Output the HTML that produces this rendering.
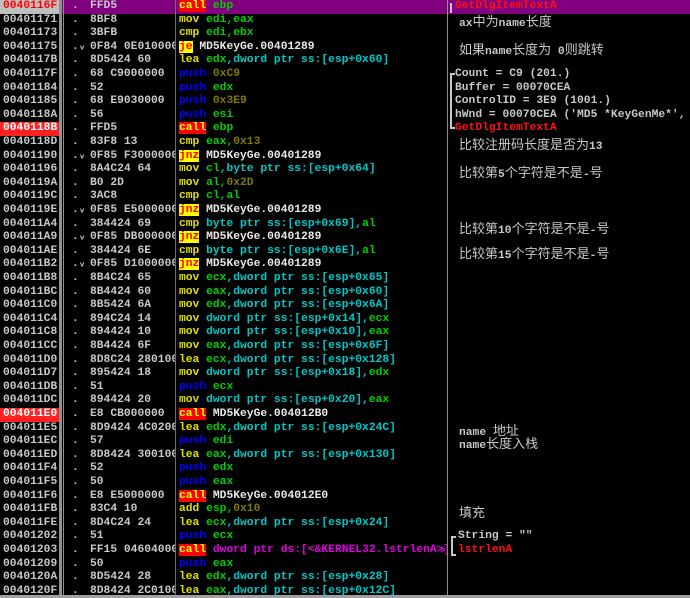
<!DOCTYPE html>
<html><head><meta charset="utf-8"><style>
body{margin:0;width:690px;height:598px;background:#000;overflow:hidden;position:relative;font-family:"Liberation Mono",monospace;font-weight:bold;font-size:11.3px;}
.r{position:absolute;left:0;width:690px;height:13.6px;line-height:13.6px;white-space:pre;}
.a{position:absolute;left:0;width:59px;padding-left:3px;box-sizing:border-box;color:#c8c8c8;height:13.6px;}
.m{position:absolute;left:72px;color:#c8c8c8;}
.h{position:absolute;left:90px;width:85px;overflow:hidden;color:#c8c8c8;}
.d{position:absolute;left:179px;width:268px;overflow:hidden;color:#e8e8e8;}
.y{color:#e0e000}.g{color:#00d000}.c{color:#00c8c8}.b{color:#0000ff}.o{color:#807800}.p{color:#e000e0}
.call{background:#ff0000;color:#ffff00;}
.j{background:#ffff00;color:#ff0000;}
.v{position:absolute;top:0;height:596px;background:#909090;}
.cm{position:absolute;left:459px;color:#c8c8c8;white-space:pre;font-family:"Liberation Mono","Noto Sans CJK SC",monospace;}
.cj{font-family:"Noto Sans CJK SC","WenQuanYi Zen Hei",sans-serif;font-weight:normal;font-size:13px;}
.rd{color:#ff1010}
</style></head><body>
<div style="position:absolute;left:0;top:0;width:690px;height:14px;background:#800080"></div>
<div class="v" style="left:59px;width:3px"></div>
<div class="v" style="left:63px;width:1px"></div>
<div class="v" style="left:175px;width:1px;background:#707070"></div>
<div class="v" style="left:447px;width:1px"></div>
<div style="position:absolute;left:0;top:595px;width:690px;height:3px;background:#a0a0a0"></div>

<div class="r" style="top:0"><span class="a" style="background:#c0c0c0;color:#ff0000">0040116F</span><span class="m">.</span><span class="h">FFD5</span><span class="d"><span class="call">call</span> <span class="g">ebp</span></span></div>
<div class="r" style="top:13.6px"><span class="a">00401171</span><span class="m">.</span><span class="h">8BF8</span><span class="d"><span class="y">mov</span> <span class="g">edi,eax</span></span></div>
<div class="r" style="top:27.2px"><span class="a">00401173</span><span class="m">.</span><span class="h">3BFB</span><span class="d"><span class="y">cmp</span> <span class="g">edi,ebx</span></span></div>
<div class="r" style="top:40.8px"><span class="a">00401175</span><span class="m">.ᵥ</span><span class="h">0F84 0E010000</span><span class="d"><span class="j">je</span> MD5KeyGe.00401289</span></div>
<div class="r" style="top:54.4px"><span class="a">0040117B</span><span class="m">.</span><span class="h">8D5424 60</span><span class="d"><span class="y">lea</span> <span class="g">edx</span><span class="c">,dword ptr ss:[esp+0x60]</span></span></div>
<div class="r" style="top:68px"><span class="a">0040117F</span><span class="m">.</span><span class="h">68 C9000000</span><span class="d"><span class="b">push</span> <span class="o">0xC9</span></span></div>
<div class="r" style="top:81.6px"><span class="a">00401184</span><span class="m">.</span><span class="h">52</span><span class="d"><span class="b">push</span> <span class="g">edx</span></span></div>
<div class="r" style="top:95.2px"><span class="a">00401185</span><span class="m">.</span><span class="h">68 E9030000</span><span class="d"><span class="b">push</span> <span class="o">0x3E9</span></span></div>
<div class="r" style="top:108.8px"><span class="a">0040118A</span><span class="m">.</span><span class="h">56</span><span class="d"><span class="b">push</span> <span class="g">esi</span></span></div>
<div class="r" style="top:122.4px"><span class="a" style="background:#ff2020;color:#fff">0040118B</span><span class="m">.</span><span class="h">FFD5</span><span class="d"><span class="call">call</span> <span class="g">ebp</span></span></div>
<div class="r" style="top:136px"><span class="a">0040118D</span><span class="m">.</span><span class="h">83F8 13</span><span class="d"><span class="y">cmp</span> <span class="g">eax,</span><span class="o">0x13</span></span></div>
<div class="r" style="top:149.6px"><span class="a">00401190</span><span class="m">.ᵥ</span><span class="h">0F85 F3000000</span><span class="d"><span class="j">jnz</span> MD5KeyGe.00401289</span></div>
<div class="r" style="top:163.2px"><span class="a">00401196</span><span class="m">.</span><span class="h">8A4C24 64</span><span class="d"><span class="y">mov</span> <span class="g">cl</span><span class="c">,byte ptr ss:[esp+0x64]</span></span></div>
<div class="r" style="top:176.8px"><span class="a">0040119A</span><span class="m">.</span><span class="h">B0 2D</span><span class="d"><span class="y">mov</span> <span class="g">al,</span><span class="o">0x2D</span></span></div>
<div class="r" style="top:190.4px"><span class="a">0040119C</span><span class="m">.</span><span class="h">3AC8</span><span class="d"><span class="y">cmp</span> <span class="g">cl,al</span></span></div>
<div class="r" style="top:204px"><span class="a">0040119E</span><span class="m">.ᵥ</span><span class="h">0F85 E5000000</span><span class="d"><span class="j">jnz</span> MD5KeyGe.00401289</span></div>
<div class="r" style="top:217.6px"><span class="a">004011A4</span><span class="m">.</span><span class="h">384424 69</span><span class="d"><span class="y">cmp</span> <span class="c">byte ptr ss:[esp+0x69],</span><span class="g">al</span></span></div>
<div class="r" style="top:231.2px"><span class="a">004011A9</span><span class="m">.ᵥ</span><span class="h">0F85 DB000000</span><span class="d"><span class="j">jnz</span> MD5KeyGe.00401289</span></div>
<div class="r" style="top:244.8px"><span class="a">004011AE</span><span class="m">.</span><span class="h">384424 6E</span><span class="d"><span class="y">cmp</span> <span class="c">byte ptr ss:[esp+0x6E],</span><span class="g">al</span></span></div>
<div class="r" style="top:258.4px"><span class="a">004011B2</span><span class="m">.ᵥ</span><span class="h">0F85 D1000000</span><span class="d"><span class="j">jnz</span> MD5KeyGe.00401289</span></div>
<div class="r" style="top:272px"><span class="a">004011B8</span><span class="m">.</span><span class="h">8B4C24 65</span><span class="d"><span class="y">mov</span> <span class="g">ecx</span><span class="c">,dword ptr ss:[esp+0x65]</span></span></div>
<div class="r" style="top:285.6px"><span class="a">004011BC</span><span class="m">.</span><span class="h">8B4424 60</span><span class="d"><span class="y">mov</span> <span class="g">eax</span><span class="c">,dword ptr ss:[esp+0x60]</span></span></div>
<div class="r" style="top:299.2px"><span class="a">004011C0</span><span class="m">.</span><span class="h">8B5424 6A</span><span class="d"><span class="y">mov</span> <span class="g">edx</span><span class="c">,dword ptr ss:[esp+0x6A]</span></span></div>
<div class="r" style="top:312.8px"><span class="a">004011C4</span><span class="m">.</span><span class="h">894C24 14</span><span class="d"><span class="y">mov</span> <span class="c">dword ptr ss:[esp+0x14],</span><span class="g">ecx</span></span></div>
<div class="r" style="top:326.4px"><span class="a">004011C8</span><span class="m">.</span><span class="h">894424 10</span><span class="d"><span class="y">mov</span> <span class="c">dword ptr ss:[esp+0x10],</span><span class="g">eax</span></span></div>
<div class="r" style="top:340px"><span class="a">004011CC</span><span class="m">.</span><span class="h">8B4424 6F</span><span class="d"><span class="y">mov</span> <span class="g">eax</span><span class="c">,dword ptr ss:[esp+0x6F]</span></span></div>
<div class="r" style="top:353.6px"><span class="a">004011D0</span><span class="m">.</span><span class="h">8D8C24 28010000</span><span class="d"><span class="y">lea</span> <span class="g">ecx</span><span class="c">,dword ptr ss:[esp+0x128]</span></span></div>
<div class="r" style="top:367.2px"><span class="a">004011D7</span><span class="m">.</span><span class="h">895424 18</span><span class="d"><span class="y">mov</span> <span class="c">dword ptr ss:[esp+0x18],</span><span class="g">edx</span></span></div>
<div class="r" style="top:380.8px"><span class="a">004011DB</span><span class="m">.</span><span class="h">51</span><span class="d"><span class="b">push</span> <span class="g">ecx</span></span></div>
<div class="r" style="top:394.4px"><span class="a">004011DC</span><span class="m">.</span><span class="h">894424 20</span><span class="d"><span class="y">mov</span> <span class="c">dword ptr ss:[esp+0x20],</span><span class="g">eax</span></span></div>
<div class="r" style="top:408px"><span class="a" style="background:#ff2020;color:#fff">004011E0</span><span class="m">.</span><span class="h">E8 CB000000</span><span class="d"><span class="call">call</span> MD5KeyGe.004012B0</span></div>
<div class="r" style="top:421.6px"><span class="a">004011E5</span><span class="m">.</span><span class="h">8D9424 4C020000</span><span class="d"><span class="y">lea</span> <span class="g">edx</span><span class="c">,dword ptr ss:[esp+0x24C]</span></span></div>
<div class="r" style="top:435.2px"><span class="a">004011EC</span><span class="m">.</span><span class="h">57</span><span class="d"><span class="b">push</span> <span class="g">edi</span></span></div>
<div class="r" style="top:448.8px"><span class="a">004011ED</span><span class="m">.</span><span class="h">8D8424 30010000</span><span class="d"><span class="y">lea</span> <span class="g">eax</span><span class="c">,dword ptr ss:[esp+0x130]</span></span></div>
<div class="r" style="top:462.4px"><span class="a">004011F4</span><span class="m">.</span><span class="h">52</span><span class="d"><span class="b">push</span> <span class="g">edx</span></span></div>
<div class="r" style="top:476px"><span class="a">004011F5</span><span class="m">.</span><span class="h">50</span><span class="d"><span class="b">push</span> <span class="g">eax</span></span></div>
<div class="r" style="top:489.6px"><span class="a">004011F6</span><span class="m">.</span><span class="h">E8 E5000000</span><span class="d"><span class="call">call</span> MD5KeyGe.004012E0</span></div>
<div class="r" style="top:503.2px"><span class="a">004011FB</span><span class="m">.</span><span class="h">83C4 10</span><span class="d"><span class="y">add</span> <span class="g">esp,</span><span class="o">0x10</span></span></div>
<div class="r" style="top:516.8px"><span class="a">004011FE</span><span class="m">.</span><span class="h">8D4C24 24</span><span class="d"><span class="y">lea</span> <span class="g">ecx</span><span class="c">,dword ptr ss:[esp+0x24]</span></span></div>
<div class="r" style="top:530.4px"><span class="a">00401202</span><span class="m">.</span><span class="h">51</span><span class="d"><span class="b">push</span> <span class="g">ecx</span></span></div>
<div class="r" style="top:544px"><span class="a">00401203</span><span class="m">.</span><span class="h">FF15 04604000</span><span class="d"><span class="call">call</span> <span class="p">dword ptr ds:[&lt;&amp;KERNEL32.lstrlenA&gt;]</span></span></div>
<div class="r" style="top:557.6px"><span class="a">00401209</span><span class="m">.</span><span class="h">50</span><span class="d"><span class="b">push</span> <span class="g">eax</span></span></div>
<div class="r" style="top:571.2px"><span class="a">0040120A</span><span class="m">.</span><span class="h">8D5424 28</span><span class="d"><span class="y">lea</span> <span class="g">edx</span><span class="c">,dword ptr ss:[esp+0x28]</span></span></div>
<div class="r" style="top:584.8px"><span class="a">0040120F</span><span class="m">.</span><span class="h">8D8424 2C010000</span><span class="d"><span class="y">lea</span> <span class="g">eax</span><span class="c">,dword ptr ss:[esp+0x12C]</span></span></div>

<!-- comments -->
<div style="position:absolute;left:450px;top:3px;width:2px;height:10px;background:#c8c8c8"></div>
<div class="cm rd" style="top:0;line-height:13.6px;left:455px">GetDlgItemTextA</div>
<div class="cm" style="top:13px;line-height:16px">ax<span class="cj">中为</span>name<span class="cj">长度</span></div>
<div class="cm" style="top:41px;line-height:16px"><span class="cj">如果</span>name<span class="cj">长度为</span> 0<span class="cj">则跳转</span></div>
<div style="position:absolute;left:450px;top:73px;width:2px;height:56px;background:#c8c8c8"></div>
<div style="position:absolute;left:450px;top:73px;width:5px;height:2px;background:#c8c8c8"></div>
<div style="position:absolute;left:450px;top:127px;width:5px;height:2px;background:#c8c8c8"></div>
<div class="cm" style="top:68px;line-height:13.6px;left:455px">Count = C9 (201.)
Buffer = 00070CEA
ControlID = 3E9 (1001.)
hWnd = 00070CEA ('MD5 *KeyGenMe*',
<span class="rd">GetDlgItemTextA</span></div>
<div class="cm" style="top:136px;line-height:16px"><span class="cj">比较注册码长度是否为</span>13</div>
<div class="cm" style="top:164px;line-height:16px"><span class="cj">比较第</span>5<span class="cj">个字符是不是</span>-<span class="cj">号</span></div>
<div class="cm" style="top:220px;line-height:16px"><span class="cj">比较第</span>10<span class="cj">个字符是不是</span>-<span class="cj">号</span></div>
<div class="cm" style="top:245px;line-height:16px"><span class="cj">比较第</span>15<span class="cj">个字符是不是</span>-<span class="cj">号</span></div>
<div class="cm" style="top:423px;line-height:14px">name <span class="cj">地址</span></div>
<div class="cm" style="top:436px;line-height:14px">name<span class="cj">长度入栈</span></div>
<div class="cm" style="top:504px;line-height:16px"><span class="cj">填充</span></div>
<div style="position:absolute;left:451px;top:536px;width:2px;height:20px;background:#c8c8c8"></div>
<div style="position:absolute;left:451px;top:536px;width:5px;height:2px;background:#c8c8c8"></div>
<div style="position:absolute;left:451px;top:554px;width:5px;height:2px;background:#c8c8c8"></div>
<div class="cm" style="top:530.4px;line-height:13.6px;left:458px">String = ""
<span class="rd">lstrlenA</span></div>
<div style="position:absolute;left:440px;top:546px;color:#e000e0;font-size:10px">&gt;</div>
</body></html>
